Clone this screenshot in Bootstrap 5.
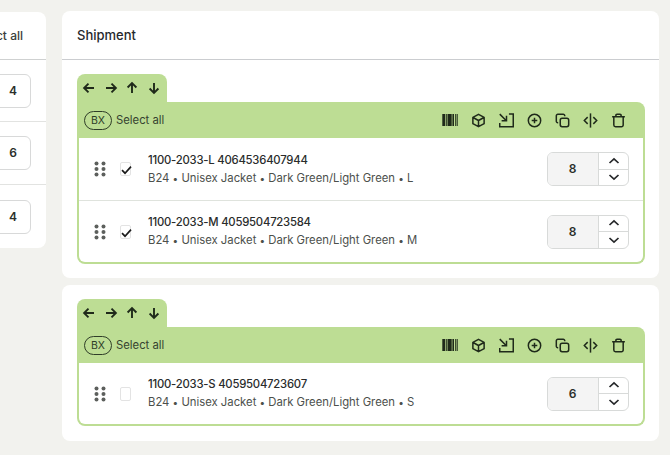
<!DOCTYPE html>
<html lang="en">
<head>
    <meta charset="UTF-8">
    <meta name="viewport" content="width=device-width, initial-scale=1.0">
    <title>Shipment</title>
    <link href="https://cdn.jsdelivr.net/npm/bootstrap@5.3.0/dist/css/bootstrap.min.css" rel="stylesheet">
    <style>
        html, body { height: 455px; overflow: hidden; }
        body { background: #f2f2ee; font-family: Inter, "Noto Sans", sans-serif; color: #2b2f2b; font-size: 12px; }
        .page-wrap { padding-top: 11px; gap: 16px; width: 670px; }

        /* left column, cut by the window edge */
        .side-col { width: 46px; flex: none; overflow: hidden; }
        .side-card { width: 200px; margin-left: -154px; margin-top: 1px; background: #fff; border-radius: 8px; height: 236px; }
        .side-head { height: 48px; border-bottom: 1px solid #cfd1d1; font-size: 12px; font-weight: 500; padding-right: 23px; padding-top: 15px; text-align: right; color: #3a3e3a; }
        .side-row { height: 63px; border-bottom: 1px solid #e2e3e1; padding-right: 15px; }
        .side-head + .side-row { height: 62px; }
        .side-row:last-child { border-bottom: 0; }
        .side-qty { width: 60px; height: 34px; border: 1px solid #d8d9d9; border-radius: 6px; font-weight: 600; font-size: 12px; padding-right: 13px; text-align: right; line-height: 32px; }

        /* right column */
        .main-col { width: 597px; flex: none; }
        .ship-card { background: #fff; border-radius: 8px; padding: 0 14px 14px 15px; margin-bottom: 7px; }
        .ship-card-plain { padding-top: 14px; padding-bottom: 15px; }
        .ship-head { height: 49px; margin: 0 -14px 14px -15px; padding: 15px 15px 0; border-bottom: 1px solid #cbcdd0; font-size: 13px; font-weight: 500; color: #26282c; }
        .box-tab { width: 90px; height: 28px; background: #bddd94; border-radius: 8px 8px 0 0; padding: 0 6px 0 5px; }
        .box-bar { height: 36px; background: #bddd94; border-radius: 0 8px 0 0; padding: 0 18px 0 7px; }
        .bx-pill { width: 28px; height: 19px; border: 1px solid #2f3d28; border-radius: 10px; font-size: 10.5px; line-height: 17px; text-align: center; color: #2f3d28; margin-right: 4px; }
        .sel-txt { font-size: 11.3px; color: #364230; }
        .tool-gap { gap: 10px; }
        .box-items { border: 2px solid #bddd94; border-top: 0; border-radius: 0 0 8px 8px; background: #fff; }
        .box-row { height: 63px; padding: 0 14px 0 15px; border-bottom: 1px solid #dfe3dd; }
        .box-row:last-child { height: 61px; border-bottom: 0; }
        .grip-ico { width: 12px; margin-right: 14px; flex: none; }
        .tick-box { width: 11px; height: 14px; border: 1px solid #e3e3e3; border-radius: 2px; background: #fff; margin-right: 17px; flex: none; position: relative; }
        .tick-box svg { position: absolute; left: -1px; top: 1px; }
        .item-title { font-size: 11.3px; font-weight: 500; color: #2a2c2c; line-height: 17px; letter-spacing: -.22px; }
        .item-sub { font-size: 11.3px; color: #4c504c; line-height: 18px; }
        .dot-sep { font-size: 10px; }
        .qty-box { width: 82px; height: 34px; border: 1px solid #d8dad9; border-radius: 6px; overflow: hidden; flex: none; }
        .qty-num { width: 51px; background: #f4f4f4; border-right: 1px solid #d8dad9; font-weight: 600; font-size: 12px; padding-right: 1px; }
        .qty-btn { height: 16px; flex: 1 1 0; }
        .qty-btn:first-child { border-bottom: 1px solid #d8dad9; }
        .tool-slot { width: 18px; }
    </style>
</head>
<body>
    <svg width="0" height="0" class="position-absolute">
        <defs>
            <symbol id="ico-left" viewBox="0 0 14 14"><path d="M12 7H2.2M6.5 2.6 2.1 7l4.4 4.4" fill="none" stroke="#1f2a1a" stroke-width="1.9"/></symbol>
            <symbol id="ico-right" viewBox="0 0 14 14"><path d="M2 7h9.8M7.5 2.6 11.9 7l-4.4 4.4" fill="none" stroke="#1f2a1a" stroke-width="1.9"/></symbol>
            <symbol id="ico-up" viewBox="0 0 14 14"><path d="M7 12V2.2M2.6 6.5 7 2.1l4.4 4.4" fill="none" stroke="#1f2a1a" stroke-width="1.9"/></symbol>
            <symbol id="ico-down" viewBox="0 0 14 14"><path d="M7 2v9.8M2.6 7.5 7 11.9l4.4-4.4" fill="none" stroke="#1f2a1a" stroke-width="1.9"/></symbol>
            <symbol id="ico-barcode" viewBox="0 0 16 14"><path d="M.3 1h3v12h-3zM4 1h.8v12H4zM5.5 1h4.2v12H5.5zM10.4 1h1.6v12h-1.6zM13 1h.8v12H13zM14.6 1h1.1v12h-1.1z" fill="#1f2a1a"/></symbol>
            <symbol id="ico-cube" viewBox="0 0 16 16"><path d="M8 1.4 14 4.6v6.8L8 14.6l-6-3.2V4.6zM2.2 4.8 8 8l5.8-3.2M8 8v6.4" fill="none" stroke="#1f2a1a" stroke-width="1.6" stroke-linejoin="round"/></symbol>
            <symbol id="ico-import" viewBox="0 0 16 16"><path d="M.8 10.6v4h14.4V1h-4.6M.8 1.2l6.8 6.8M8 3v5.2H2.8" fill="none" stroke="#1f2a1a" stroke-width="1.6"/></symbol>
            <symbol id="ico-plus" viewBox="0 0 16 16"><circle cx="8" cy="8" r="6.6" fill="none" stroke="#1f2a1a" stroke-width="1.6"/><path d="M8 5v6M5 8h6" stroke="#1f2a1a" stroke-width="1.6"/></symbol>
            <symbol id="ico-copy" viewBox="0 0 16 16"><rect x="5.6" y="5.6" width="9" height="9" rx="2" fill="none" stroke="#1f2a1a" stroke-width="1.6"/><path d="M10.4 3.4V3a1.6 1.6 0 0 0-1.6-1.6H3A1.6 1.6 0 0 0 1.4 3v5.8A1.6 1.6 0 0 0 3 10.4h.4" fill="none" stroke="#1f2a1a" stroke-width="1.6"/></symbol>
            <symbol id="ico-split" viewBox="0 0 16 16"><path d="M8 .4v15.2" stroke="#1f2a1a" stroke-width="1.6"/><path d="M5 4.4 1.4 8 5 11.6M11 4.4 14.6 8 11 11.6" fill="none" stroke="#1f2a1a" stroke-width="1.6"/></symbol>
            <symbol id="ico-trash" viewBox="0 0 16 16"><path d="M1.2 4h13.6M5.2 4V2.6A1.2 1.2 0 0 1 6.4 1.4h3.2a1.2 1.2 0 0 1 1.2 1.2V4M3 4v8.8a1.8 1.8 0 0 0 1.8 1.8h6.4a1.8 1.8 0 0 0 1.8-1.8V4" fill="none" stroke="#1f2a1a" stroke-width="1.6"/></symbol>
            <symbol id="ico-chev-up" viewBox="0 0 12 8"><path d="M1.5 6 6 1.8 10.5 6" fill="none" stroke="#26282a" stroke-width="1.7"/></symbol>
            <symbol id="ico-chev-down" viewBox="0 0 12 8"><path d="M1.5 2 6 6.2 10.5 2" fill="none" stroke="#26282a" stroke-width="1.7"/></symbol>
            <symbol id="ico-grip" viewBox="0 0 12 16"><g fill="#5c5f5c"><circle cx="2.5" cy="2.5" r="2"/><circle cx="9.5" cy="2.5" r="2"/><circle cx="2.5" cy="8" r="2"/><circle cx="9.5" cy="8" r="2"/><circle cx="2.5" cy="13.5" r="2"/><circle cx="9.5" cy="13.5" r="2"/></g></symbol>
        </defs>
    </svg>

    <div class="d-flex page-wrap">
        <!-- left list, mostly out of the window -->
        <div class="side-col">
            <div class="side-card">
                <div class="side-head">Select all</div>
                <div class="side-row d-flex align-items-center justify-content-end"><div class="side-qty">4</div></div>
                <div class="side-row d-flex align-items-center justify-content-end"><div class="side-qty">6</div></div>
                <div class="side-row d-flex align-items-center justify-content-end"><div class="side-qty">4</div></div>
            </div>
        </div>

        <div class="main-col" id="main-col"></div>
    </div>

    <script src="https://cdn.jsdelivr.net/npm/bootstrap@5.3.0/dist/js/bootstrap.bundle.min.js"></script>
    <script>
        const boxes = [
            { head: true, items: [
                { sku: '1100-2033-L 4064536407944', size: 'L', checked: true, qty: 8 },
                { sku: '1100-2033-M 4059504723584', size: 'M', checked: true, qty: 8 }
            ]},
            { head: false, items: [
                { sku: '1100-2033-S 4059504723607', size: 'S', checked: false, qty: 6 }
            ]}
        ];

        const ico = (name, w, h) => `<svg width="${w}" height="${h}"><use href="#${name}"/></svg>`;
        const tabIcons = ['ico-left', 'ico-right', 'ico-up', 'ico-down'];
        const barIcons = [['ico-barcode', 16, 14], ['ico-cube', 15, 15], ['ico-import', 15, 15], ['ico-plus', 15, 15], ['ico-copy', 15, 15], ['ico-split', 15, 15], ['ico-trash', 15, 15]];
        const dot = '<span class="dot-sep">•</span>';

        const rowHtml = item => `
            <div class="box-row d-flex align-items-center">
                <div class="grip-ico d-flex">${ico('ico-grip', 12, 16)}</div>
                <div class="tick-box">${item.checked ? '<svg width="13" height="12" viewBox="0 0 13 12"><path d="M2 6.2 5 9.2 11 2.6" fill="none" stroke="#1b1b1b" stroke-width="1.7"/></svg>' : ''}</div>
                <div class="flex-grow-1">
                    <div class="item-title">${item.sku}</div>
                    <div class="item-sub">B24 ${dot} Unisex Jacket ${dot} Dark Green/Light Green ${dot} ${item.size}</div>
                </div>
                <div class="qty-box d-flex">
                    <div class="qty-num d-flex align-items-center justify-content-center">${item.qty}</div>
                    <div class="d-flex flex-column flex-grow-1">
                        <div class="qty-btn d-flex align-items-center justify-content-center">${ico('ico-chev-up', 12, 8)}</div>
                        <div class="qty-btn d-flex align-items-center justify-content-center">${ico('ico-chev-down', 12, 8)}</div>
                    </div>
                </div>
            </div>`;

        document.getElementById('main-col').innerHTML = boxes.map(box => `
            <div class="ship-card ${box.head ? '' : 'ship-card-plain'}">
                ${box.head ? '<div class="ship-head">Shipment</div>' : ''}
                <div class="box-tab d-flex align-items-center justify-content-between">
                    ${tabIcons.map(n => ico(n, 14, 14)).join('')}
                </div>
                <div class="box-bar d-flex align-items-center">
                    <div class="bx-pill">BX</div>
                    <div class="sel-txt me-auto">Select all</div>
                    <div class="d-flex align-items-center tool-gap">
                        ${barIcons.map(i => `<span class="d-flex justify-content-center tool-slot">${ico(i[0], i[1], i[2])}</span>`).join('')}
                    </div>
                </div>
                <div class="box-items">${box.items.map(rowHtml).join('')}</div>
            </div>`).join('');
    </script>
</body>
</html>
